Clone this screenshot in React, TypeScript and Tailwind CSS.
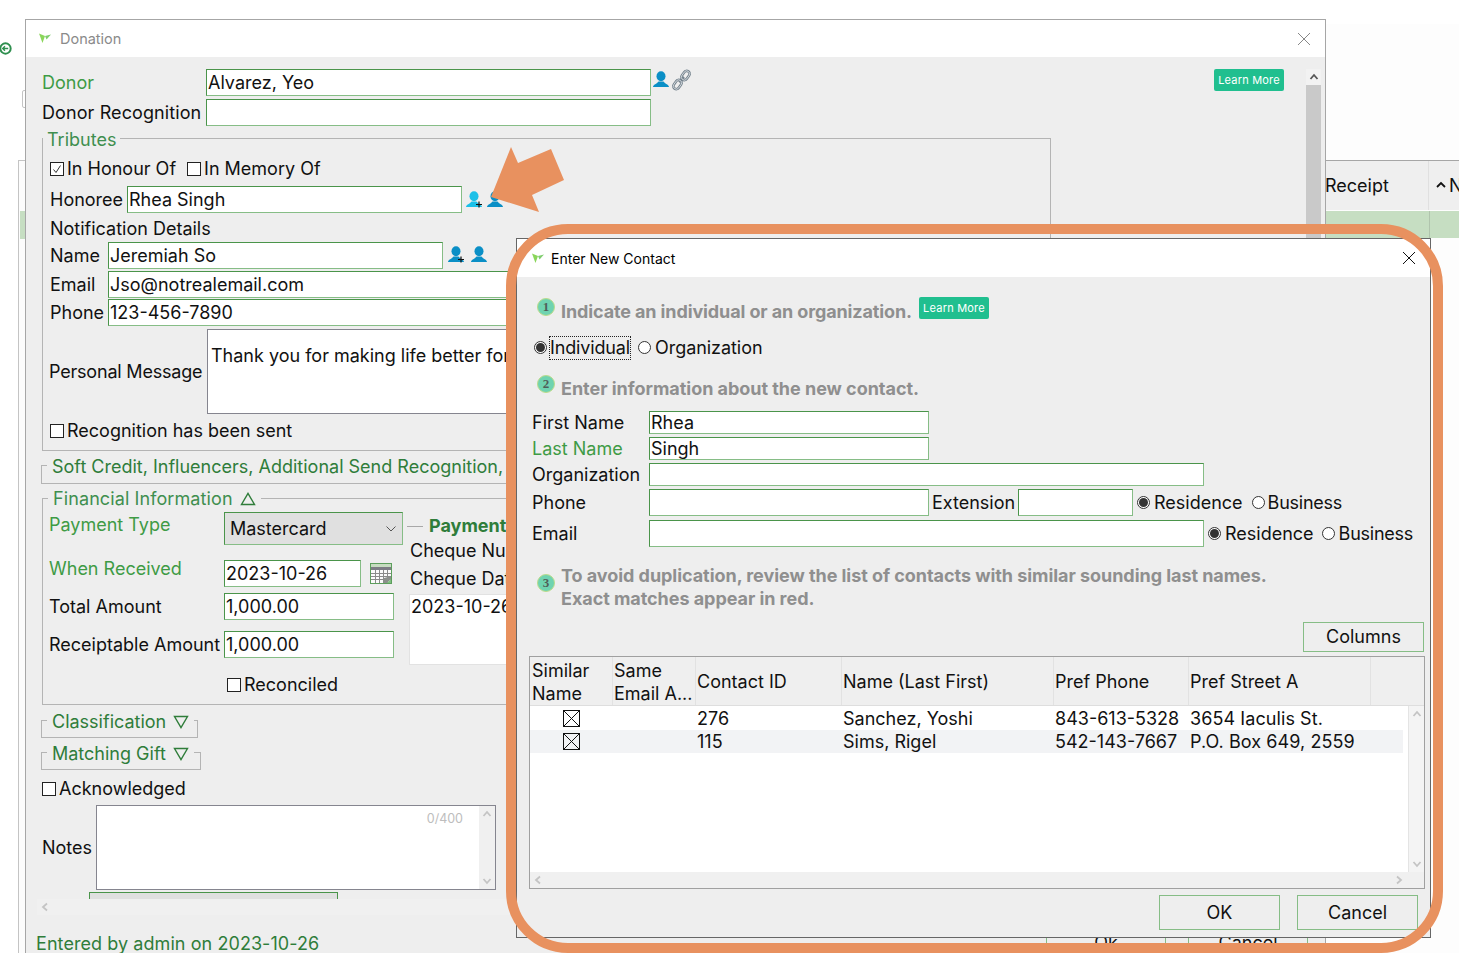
import React from 'react';

const inputEdge =
  'border border-t-[#4a944a] border-l-[#4a944a] border-r-[#86bd86] border-b-[#86bd86] bg-white';
const plainEdge = 'border border-[#85858f] bg-white';
const green = 'text-[#3e9b45]';
const darkGreen = 'text-[#2f7d3a]';

const Logo: React.FC = () => (
  <svg width="15" height="12" viewBox="0 0 15 12" className="shrink-0">
    <path d="M1 0.500l6 2.500-2.500 7z" fill="#8ad65a" />
    <path d="M7 3l6-1.500-4.500 5z" fill="#5fc04a" opacity="0.8" />
  </svg>
);

const Person: React.FC<{ color?: string; plus?: boolean }> = ({ color = '#0a8fc6', plus }) => (
  <svg width="18" height="17" viewBox="0 0 18 17" className="shrink-0">
    <ellipse cx="8" cy="5.200" rx="4.500" ry="5" fill={color} />
    <path d="M0 16c0-2.500 4-3 5.500-5.500h5c1.500 2.500 5.500 3 5.500 5.500z" fill={color} />
    {plus && <path d="M13 10.500v6M10 13.500h6" stroke="#111" strokeWidth="1.200" />}
  </svg>
);

const Chain: React.FC = () => (
  <svg width="21" height="22" viewBox="0 0 21 22" fill="none" className="shrink-0">
    <g stroke="#75838d" strokeWidth="2.600">
      <rect x="11.500" y="1.500" width="6" height="10" rx="3" transform="rotate(35 14.500 6.500)" />
      <rect x="3.500" y="10.500" width="6" height="10" rx="3" transform="rotate(35 6.500 15.500)" />
      <path d="M8 13l5-5" />
    </g>
    <g stroke="#dfe4e8" strokeWidth="0.800">
      <rect x="11.500" y="1.500" width="6" height="10" rx="3" transform="rotate(35 14.500 6.500)" />
      <rect x="3.500" y="10.500" width="6" height="10" rx="3" transform="rotate(35 6.500 15.500)" />
    </g>
  </svg>
);

const Close: React.FC<{ color: string }> = ({ color }) => (
  <svg width="14" height="14" viewBox="0 0 14 14" stroke={color} strokeWidth="1" className="shrink-0">
    <path d="M1 1l12 12M13 1L1 13" />
  </svg>
);

const Calendar: React.FC = () => (
  <svg width="22" height="21" viewBox="0 0 22 21" className="shrink-0">
    <rect x="0.500" y="0.500" width="21" height="20" fill="#fafafa" stroke="#5c9e5c" />
    <rect x="1" y="1" width="20" height="3" fill="#c6dcc0" />
    <rect x="1" y="4" width="20" height="3" fill="#7c7c84" />
    <path d="M1 10.500h20M1 13.500h20M1 16.500h20M5.500 7v13M9.500 7v13M13.500 7v13M17.500 7v13" stroke="#8a8a8a" strokeWidth="1" />
    <path d="M13 20l1-5 7-2v3l-4 4z" fill="#8b8f8b" />
    <path d="M17 20l4-4v4z" fill="#7fc07f" />
  </svg>
);

const Tri: React.FC<{ down?: boolean }> = ({ down }) => (
  <svg width="16" height="14" viewBox="0 0 16 14" fill="none" stroke="#2f7d3a" strokeWidth="1.400" className="shrink-0">
    {down ? <path d="M1.500 1.500h13L8 12.500z" /> : <path d="M1.500 12.500h13L8 1.500z" />}
  </svg>
);

const Chevron: React.FC<{ dir: 'up' | 'down' | 'left' | 'right'; color?: string; size?: number }> = ({
  dir,
  color = '#c4c4c4',
  size = 10,
}) => {
  const d = {
    up: 'M1.500 7L5 3l3.500 4',
    down: 'M1.500 3L5 7l3.500-4',
    left: 'M7 1.500L3 5l4 3.500',
    right: 'M3 1.500L7 5l-4 3.500',
  }[dir];
  return (
    <svg width={size} height={size} viewBox="0 0 10 10" fill="none" stroke={color} strokeWidth="1.800">
      <path d={d} />
    </svg>
  );
};

const Check: React.FC<{ checked?: boolean }> = ({ checked }) => (
  <span className="w-[14px] h-[14px] shrink-0 border border-[#222] bg-white flex items-center justify-center">
    {checked && (
      <svg width="10" height="10" viewBox="0 0 10 10" fill="none" stroke="#333" strokeWidth="1">
        <path d="M1.500 5.500l2.500 3L8.500 1.500" />
      </svg>
    )}
  </span>
);

const Radio: React.FC<{ on?: boolean }> = ({ on }) => (
  <span className="w-[13px] h-[13px] shrink-0 rounded-full border border-[#333] bg-white flex items-center justify-center">
    {on && <span className="w-[9px] h-[9px] rounded-full bg-[#333]" />}
  </span>
);

const LearnMore: React.FC = () => (
  <span className="w-[70px] h-[22px] shrink-0 rounded-[2px] bg-[#20bf8f] text-white text-[11px] tracking-[0.2px] flex items-center justify-center">
    Learn More
  </span>
);

const Step: React.FC<{ n: number }> = ({ n }) => (
  <span className="w-[18px] h-[18px] shrink-0 rounded-full bg-[#6fd3b0] border border-[#bcdc8c] flex items-center justify-center text-[13px] font-bold text-[#4f5f5a] [font-family:'Liberation_Serif',serif]">
    {n}
  </span>
);

const Legend: React.FC<{ children: React.ReactNode; className?: string }> = ({ children, className }) => (
  <div className={`absolute left-[5px] flex items-center gap-[7px] bg-[#eeeeee] px-[5px] h-[20px] ${className ?? ''}`}>
    {children}
  </div>
);

const Collapsed: React.FC<{ label: string; w: string; mt: string }> = ({ label, w, mt }) => (
  <div className={`relative ${mt} -ml-px h-[18px] ${w} border border-[#b4b4b4]`}>
    <Legend className="-top-[9px]">
      <span className={darkGreen}>{label}</span>
      <Tri down />
    </Legend>
  </div>
);

const DonationForm: React.FC = () => (
  <div className="flex-1 min-w-0 pl-[16px] pr-[22px] pt-[12px]">
    <div className="flex items-center h-[27px]">
      <span className={`w-[164px] ${green}`}>Donor</span>
      <div className={`w-[445px] h-full pl-px flex items-center ${inputEdge}`}>Alvarez, Yeo</div>
      <div className="flex items-center ml-[2px] -mt-[6px]">
        <Person />
        <Chain />
      </div>
      <div className="ml-auto -mt-[6px]">
        <LearnMore />
      </div>
    </div>
    <div className="flex items-center h-[27px] mt-[3px]">
      <span className="w-[164px] tracking-[0.1px]">Donor Recognition</span>
      <div className={`w-[445px] h-full ${inputEdge}`} />
    </div>

    <div className="relative mt-[12px] w-[1009px] h-[313px] border border-[#b4b4b4] pl-[7px] pt-[20px]">
      <Legend className="-top-[9px] !left-0 !px-[4px]">
        <span className="text-[#3f8f4f]">Tributes</span>
      </Legend>
      <div className="flex items-center h-[20px]">
        <Check checked />
        <span className="ml-[3px]">In Honour Of</span>
        <span className="ml-[11px]">
          <Check />
        </span>
        <span className="ml-[3px]">In Memory Of</span>
      </div>
      <div className="flex items-center h-[27px] mt-[7px]">
        <span className="w-[77px]">Honoree</span>
        <div className={`w-[335px] h-full pl-px flex items-center ${inputEdge}`}>Rhea Singh</div>
        <div className="flex items-center ml-[4px] gap-[3px] -mt-[1px]">
          <Person color="#1cc0e8" plus />
          <Person />
        </div>
      </div>
      <div className="h-[20px] mt-[6px] flex items-center">Notification Details</div>
      <div className="flex items-center h-[27px] mt-[3px]">
        <span className="w-[58px]">Name</span>
        <div className={`w-[335px] h-full pl-px flex items-center ${inputEdge}`}>Jeremiah So</div>
        <div className="flex items-center ml-[5px] gap-[5px] -mt-[3px]">
          <Person plus />
          <Person />
        </div>
      </div>
      <div className="flex items-center h-[27px] mt-[2px]">
        <span className="w-[58px]">Email</span>
        <div className={`w-[700px] h-full pl-px flex items-center ${inputEdge}`}>Jso@notrealemail.com</div>
      </div>
      <div className="flex items-center h-[27px] mt-px">
        <span className="w-[58px]">Phone</span>
        <div className={`w-[700px] h-full pl-px flex items-center ${inputEdge}`}>123-456-7890</div>
      </div>
      <div className="flex items-center h-[85px] mt-[3px] -ml-px">
        <span className="w-[158px] tracking-[-0.2px]">Personal Message</span>
        <div className={`w-[700px] h-full pl-[3px] pt-[14px] leading-[24px] whitespace-nowrap overflow-hidden ${plainEdge}`}>
          Thank you for making life better for
        </div>
      </div>
      <div className="flex items-center h-[20px] mt-[7px]">
        <Check />
        <span className="ml-[3px]">Recognition has been sent</span>
      </div>
    </div>

    <div className="relative mt-[14px] -ml-px w-[1010px] h-[19px] border border-[#b4b4b4]">
      <Legend className="-top-[9px] whitespace-nowrap">
        <span className={darkGreen}>Soft Credit, Influencers, Additional Send Recognition, Split</span>
      </Legend>
    </div>

    <div className="relative mt-[14px] w-[1009px] h-[207px] border border-[#b4b4b4] flex">
      <Legend className="-top-[10px]">
        <span className="text-[#3f8f4f] tracking-[0.1px]">Financial Information</span>
        <Tri />
      </Legend>
      <div className="w-[364px] shrink-0 pl-[6px] pt-[13px]">
        <div className="flex h-[33px]">
          <span className={`w-[175px] mt-[2px] ${green}`}>Payment Type</span>
          <div className={`w-[179px] h-full px-[5px] flex items-center justify-between !bg-[#e0e0e0] ${inputEdge}`}>
            Mastercard
            <svg width="12" height="8" viewBox="0 0 12 8" fill="none" stroke="#555" strokeWidth="1">
              <path d="M1.500 1.500L6 6l4.500-4.500" />
            </svg>
          </div>
        </div>
        <div className="flex h-[27px] mt-[15px]">
          <span className={`w-[175px] -mt-[2px] ${green}`}>When Received</span>
          <div className={`w-[137px] h-full pl-px flex items-center ${inputEdge}`}>2023-10-26</div>
          <span className="ml-[9px] mt-[3px]">
            <Calendar />
          </span>
        </div>
        <div className="flex items-center h-[27px] mt-[6px]">
          <span className="w-[175px]">Total Amount</span>
          <div className={`w-[170px] h-full pl-px flex items-center ${inputEdge}`}>1,000.00</div>
        </div>
        <div className="flex items-center h-[27px] mt-[11px]">
          <span className="w-[175px]">Receiptable Amount</span>
          <div className={`w-[170px] h-full pl-px flex items-center ${inputEdge}`}>1,000.00</div>
        </div>
        <div className="flex items-center h-[20px] mt-[17px] pl-[178px]">
          <Check />
          <span className="ml-[3px]">Reconciled</span>
        </div>
      </div>
      <div className="flex-1 pt-[15px]">
        <div className="flex items-center h-[24px]">
          <span className="w-[16px] h-px bg-[#a8a8a8]" />
          <span className={`ml-[6px] font-bold ${darkGreen}`}>Payment Details</span>
        </div>
        <div className="ml-[3px] mt-[2px] h-[22px] flex items-center">Cheque Number</div>
        <div className="ml-[3px] mt-[6px] h-[22px] flex items-center">Cheque Date</div>
        <div className="ml-[2px] mt-[4px] h-[71px] w-[400px] bg-white border border-[#e2e2e2] pl-px leading-[24px]">
          2023-10-26
        </div>
      </div>
    </div>

    <Collapsed label="Classification" w="w-[157px]" mt="mt-[15px]" />
    <Collapsed label="Matching Gift" w="w-[160px]" mt="mt-[14px]" />

    <div className="flex items-center h-[20px] mt-[9px]">
      <Check />
      <span className="ml-[3px]">Acknowledged</span>
    </div>
    <div className="flex items-center h-[85px] mt-[6px]">
      <span className="w-[54px]">Notes</span>
      <div className={`relative w-[400px] h-full flex justify-end ${plainEdge}`}>
        <span className="absolute right-[32px] top-[2px] text-[12.500px] text-[#bdbdbd]">0/400</span>
        <div className="w-[16px] bg-[#f0f0f0] flex flex-col items-center justify-between py-[3px]">
          <Chevron dir="up" />
          <Chevron dir="down" />
        </div>
      </div>
    </div>
    <div className="ml-[47px] mt-[2px] w-[249px] h-[7px] bg-[#e0e0e0] border border-b-0 border-[#4a944a]" />
    <div className="-ml-[5px] -mr-[22px] h-[16px] bg-[#f0f0f0] flex items-center pl-[3px]">
      <Chevron dir="left" />
    </div>
  </div>
);

const DonationWindow: React.FC = () => (
  <div className="absolute left-[25px] top-[19px] w-[1301px] h-[960px] border border-[#a6a6a6] bg-[#eeeeee] flex flex-col overflow-hidden">
    <div className="h-[37px] shrink-0 bg-white flex items-center pl-[12px] pr-[14px] text-[14.500px] text-[#8a8a8a]">
      <Logo />
      <span className="ml-[7px]">Donation</span>
      <span className="ml-auto">
        <Close color="#888" />
      </span>
    </div>
    <div className="h-[858px] shrink-0 flex">
      <DonationForm />
      <div className="w-[15px] mr-[4px] mt-[12px] shrink-0 flex flex-col">
        <div className="h-[16px] bg-[#f2f2f2] flex items-center justify-center">
          <Chevron dir="up" color="#555" />
        </div>
        <div className="flex-1 bg-[#c9c9c9]" />
      </div>
    </div>
    <div className="flex pl-[10px]">
      <div className={`mt-[19px] leading-[20px] tracking-[0.07px] ${darkGreen}`}>Entered by admin on 2023-10-26</div>
      <div className="ml-auto flex gap-[22px] mt-[10px] pr-[17px]">
        <div className="w-[120px] h-[36px] border border-[#86bd86] flex items-center justify-center">Ok</div>
        <div className="w-[120px] h-[36px] border border-[#86bd86] flex items-center justify-center">Cancel</div>
      </div>
    </div>
  </div>
);

const TableHeadCell: React.FC<{ children: React.ReactNode; className?: string }> = ({ children, className }) => (
  <div className={`border-r border-[#e2e2e2] flex items-center leading-[23px] ${className ?? 'pl-px'}`}>{children}</div>
);

const XBox: React.FC = () => (
  <svg width="17" height="17" viewBox="0 0 17 17" fill="none" stroke="#111" strokeWidth="1">
    <rect x="0.500" y="0.500" width="16" height="16" />
    <path d="M1 1l15 15M16 1L1 16" />
  </svg>
);

const contacts = [
  { id: '276', name: 'Sanchez, Yoshi', phone: '843-613-5328', street: '3654 Iaculis St.' },
  { id: '115', name: 'Sims, Rigel', phone: '542-143-7667', street: 'P.O. Box 649, 2559' },
];

const columns = 'grid grid-cols-[83px_83px_146px_212px_135px_182px_1fr]';

const ContactsTable: React.FC = () => (
  <div className="mt-[4px] h-[233px] border border-[#a0a0a0] bg-white flex flex-col">
    <div className={`${columns} h-[49px] shrink-0 bg-[#efefef] border-b border-[#dedede]`}>
      <TableHeadCell className="pl-[2px] pt-[2px]">
        <span>
          Similar
          <br />
          Name
        </span>
      </TableHeadCell>
      <TableHeadCell className="pl-px pt-[2px]">
        <span>
          Same
          <br />
          Email A...
        </span>
      </TableHeadCell>
      <TableHeadCell>Contact ID</TableHeadCell>
      <TableHeadCell>Name (Last First)</TableHeadCell>
      <TableHeadCell>Pref Phone</TableHeadCell>
      <TableHeadCell>Pref Street A</TableHeadCell>
      <div />
    </div>
    <div className="flex-1 min-h-0 flex">
      <div className="flex-1 pr-[5px] pt-px border-r border-[#e4e4e4]">
        {contacts.map((c, i) => (
          <div
            key={c.id}
            className={`grid grid-cols-[83px_83px_146px_212px_135px_1fr] h-[23px] items-center ${i % 2 ? 'bg-[#f2f3f5]' : 'bg-white'}`}
          >
            <span className="flex justify-center">
              <XBox />
            </span>
            <span />
            <span className="pl-px">{c.id}</span>
            <span className="pl-px">{c.name}</span>
            <span className="pl-px">{c.phone}</span>
            <span className="pl-px whitespace-nowrap tracking-[0.08px]">{c.street}</span>
          </div>
        ))}
      </div>
      <div className="w-[15px] bg-[#f4f4f4] flex flex-col items-center justify-between py-[3px] text-[#ccc]">
        <Chevron dir="up" />
        <Chevron dir="down" />
      </div>
    </div>
    <div className="h-[16px] shrink-0 bg-[#f0f0f0] flex items-center justify-between pl-[3px] pr-[20px]">
      <Chevron dir="left" />
      <Chevron dir="right" />
    </div>
  </div>
);

const Heading: React.FC<{ children: React.ReactNode; className?: string }> = ({ children, className }) => (
  <div className={`font-bold text-[#8f8f8f] text-[18px] whitespace-nowrap ${className ?? ''}`}>{children}</div>
);

const ContactWindow: React.FC = () => (
  <div className="absolute left-[516px] top-[238px] w-[915px] h-[700px] border border-[#666] bg-[#eeeeee] flex flex-col">
    <div className="h-[38px] shrink-0 bg-white flex items-center pl-[14px] pr-[14px] pt-px text-[14px] text-black">
      <Logo />
      <span className="ml-[5px]">Enter New Contact</span>
      <span className="ml-auto -mt-px">
        <Close color="#111" />
      </span>
    </div>
    <div className="flex-1 pl-[12px] pr-[5px] pt-[20px]">
      <div className="pl-[8px] flex items-start h-[22px]">
        <span className="mt-px">
          <Step n={1} />
        </span>
        <Heading className="ml-[6px] mt-[3px] leading-[24px] tracking-[-0.12px]">
          Indicate an individual or an organization.
        </Heading>
        <span className="ml-[7px]">
          <LearnMore />
        </span>
      </div>

      <div className="pl-[5px] flex items-center h-[22px] mt-[17px] pt-[1px]">
        <Radio on />
        <span className="ml-[3px] w-[80px] h-[22px] whitespace-nowrap tracking-[-0.15px] flex items-center outline-1 outline-dotted outline-[#222]">
          Individual
        </span>
        <span className="ml-[8px]">
          <Radio />
        </span>
        <span className="ml-[4px] tracking-[-0.05px]">Organization</span>
      </div>

      <div className="pl-[8px] flex items-start h-[18px] mt-[17px]">
        <Step n={2} />
        <Heading className="ml-[6px] mt-[2px] leading-[24px] tracking-[-0.03px]">
          Enter information about the new contact.
        </Heading>
      </div>

      <div className="pl-[3px] mt-[18px]">
        <div className="flex items-center h-[23px]">
          <span className="w-[117px]">First Name</span>
          <div className={`w-[280px] h-full pl-px flex items-center ${inputEdge}`}>Rhea</div>
        </div>
        <div className="flex items-center h-[23px] mt-[3px]">
          <span className={`w-[117px] ${green}`}>Last Name</span>
          <div className={`w-[280px] h-full pl-px flex items-center ${inputEdge}`}>Singh</div>
        </div>
        <div className="flex items-center h-[23px] mt-[3px]">
          <span className="w-[117px]">Organization</span>
          <div className={`w-[555px] h-full ${inputEdge}`} />
        </div>
        <div className="flex items-center h-[27px] mt-[3px]">
          <span className="w-[117px]">Phone</span>
          <div className={`w-[280px] h-full ${inputEdge}`} />
          <span className="w-[89px] pl-[3px]">Extension</span>
          <div className={`w-[115px] h-full ${inputEdge}`} />
          <span className="ml-[4px]">
            <Radio on />
          </span>
          <span className="ml-[4px]">Residence</span>
          <span className="ml-[9px]">
            <Radio />
          </span>
          <span className="ml-[3px] tracking-[-0.25px]">Business</span>
        </div>
        <div className="flex items-center h-[27px] mt-[4px]">
          <span className="w-[117px]">Email</span>
          <div className={`w-[555px] h-full ${inputEdge}`} />
          <span className="ml-[4px]">
            <Radio on />
          </span>
          <span className="ml-[4px]">Residence</span>
          <span className="ml-[8px]">
            <Radio />
          </span>
          <span className="ml-[4px] tracking-[-0.25px]">Business</span>
        </div>
      </div>

      <div className="pl-[8px] flex items-start mt-[17px]">
        <span className="mt-[10px]">
          <Step n={3} />
        </span>
        <Heading className="ml-[6px] leading-[23px] tracking-[-0.05px]">
          To avoid duplication, review the list of contacts with similar sounding last names.
          <br />
          Exact matches appear in red.
        </Heading>
      </div>

      <div className="flex justify-end mt-[12px] pr-px">
        <div className="w-[121px] h-[30px] border border-[#86bd86] flex items-center justify-center">Columns</div>
      </div>

      <ContactsTable />

      <div className="flex justify-end gap-[17px] mt-[6px] pr-[7px]">
        <div className="w-[121px] h-[35px] border border-[#86bd86] flex items-center justify-center">OK</div>
        <div className="w-[121px] h-[35px] border border-[#86bd86] flex items-center justify-center">Cancel</div>
      </div>
    </div>
  </div>
);

const BackgroundWindow: React.FC = () => (
  <>
    <div className="absolute left-0 top-[42px] w-[12px] h-[12px] -translate-x-[1px]">
      <svg width="13" height="13" viewBox="0 0 12 12" fill="none" stroke="#2f8f4f" strokeWidth="1.800">
        <circle cx="6" cy="6" r="4.800" />
        <path d="M8.500 6H3.500M5.500 4L3.500 6l2 2" strokeWidth="1.300" />
      </svg>
    </div>
    <div className="absolute left-[22px] top-[90px] w-[4px] h-[18px] border border-[#c4c4c4] rounded-l-[2px]" />
    <div className="absolute left-[18px] top-[160px] w-[8px] h-[793px] border-l border-t border-[#c4c4c4] bg-[#fcfcfc]">
      <div className="mt-[50px] ml-px h-[28px] bg-[#c6dec2]" />
    </div>
    <div className="absolute left-[1326px] top-[24px] w-[133px] h-[929px] bg-[#fdfdfd]">
      <div className="mt-[136px] h-[50px] bg-[#efefef] border-t border-[#a6a6a6] flex">
        <div className="w-[104px] h-full border-r border-[#e0e0e0] flex items-center pt-px -ml-px">Receipt</div>
        <div className="flex-1 flex items-center pl-[7px] whitespace-nowrap overflow-hidden">
          <svg width="10" height="7" viewBox="0 0 10 7" fill="none" stroke="#111" strokeWidth="1.800" className="shrink-0 -mt-[3px]">
            <path d="M1 6l4-4 4 4" />
          </svg>
          <span className="ml-[3px]">N</span>
        </div>
      </div>
      <div className="mt-[1px] h-[27px] bg-[#c6dec2] flex">
        <div className="w-[104px] h-full border-r border-[#b0c4ad]" />
      </div>
    </div>
  </>
);

export default function App() {
  return (
    <div className="relative w-[1459px] h-[953px] overflow-hidden bg-white text-[18px] leading-[22px] text-[#111] [font-family:Inter,sans-serif]">
      <BackgroundWindow />
      <DonationWindow />
      <ContactWindow />
      <div className="absolute left-[506px] top-[224px] w-[937px] h-[729px] border-[10px] border-[#e8915f] rounded-[62px]" />
      <svg className="absolute left-[485px] top-[142px]" width="85" height="75" viewBox="485 142 85 75">
        <polygon points="511,147 518,163 551,149 564,180 532,195 539,212 491,197" fill="#e8915f" />
      </svg>
    </div>
  );
}
